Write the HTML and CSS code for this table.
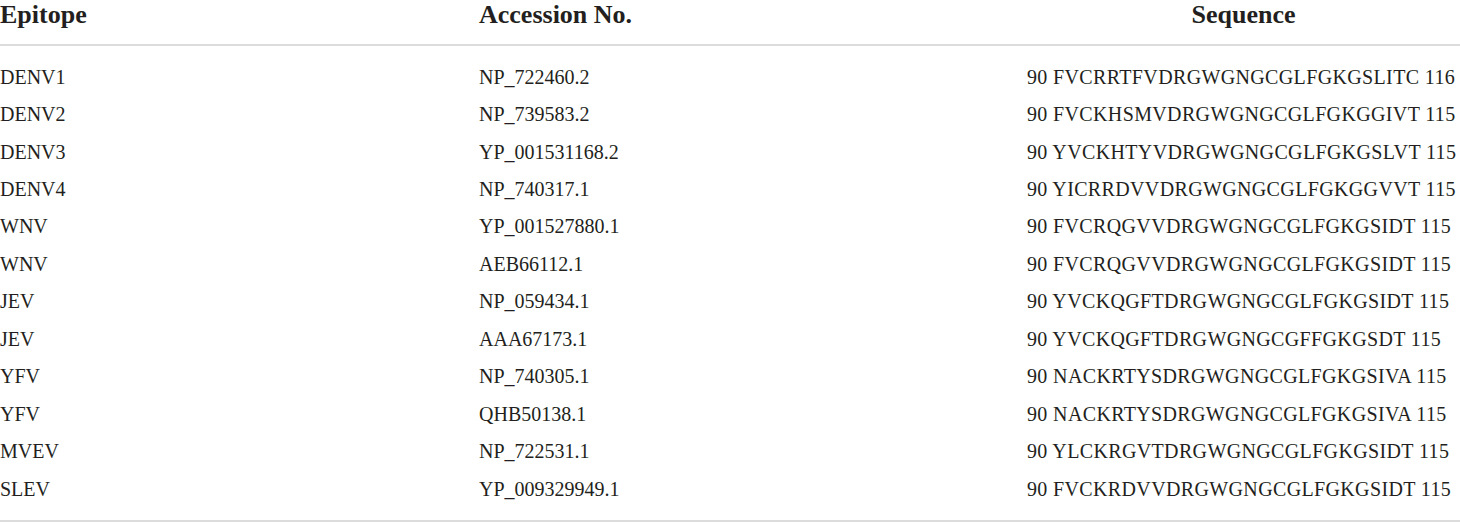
FILE: index.html
```html
<!DOCTYPE html>
<html>
<head>
<meta charset="utf-8">
<link rel="stylesheet" href="styles.css">
</head>
<body>
<table class="tbl">
  <thead>
    <tr><th class="c1">Epitope</th><th class="c2">Accession No.</th><th class="c3">Sequence</th></tr>
  </thead>
  <tbody>
    <tr><td>DENV1</td><td>NP_722460.2</td><td class="seq">90 FVCRRTFVDRGWGNGCGLFGKGSLITC 116</td></tr>
    <tr><td>DENV2</td><td>NP_739583.2</td><td class="seq">90 FVCKHSMVDRGWGNGCGLFGKGGIVT 115</td></tr>
    <tr><td>DENV3</td><td>YP_001531168.2</td><td class="seq">90 YVCKHTYVDRGWGNGCGLFGKGSLVT 115</td></tr>
    <tr><td>DENV4</td><td>NP_740317.1</td><td class="seq">90 YICRRDVVDRGWGNGCGLFGKGGVVT 115</td></tr>
    <tr><td>WNV</td><td>YP_001527880.1</td><td class="seq">90 FVCRQGVVDRGWGNGCGLFGKGSIDT 115</td></tr>
    <tr><td>WNV</td><td>AEB66112.1</td><td class="seq">90 FVCRQGVVDRGWGNGCGLFGKGSIDT 115</td></tr>
    <tr><td>JEV</td><td>NP_059434.1</td><td class="seq">90 YVCKQGFTDRGWGNGCGLFGKGSIDT 115</td></tr>
    <tr><td>JEV</td><td>AAA67173.1</td><td class="seq">90 YVCKQGFTDRGWGNGCGFFGKGSDT 115</td></tr>
    <tr><td>YFV</td><td>NP_740305.1</td><td class="seq">90 NACKRTYSDRGWGNGCGLFGKGSIVA 115</td></tr>
    <tr><td>YFV</td><td>QHB50138.1</td><td class="seq">90 NACKRTYSDRGWGNGCGLFGKGSIVA 115</td></tr>
    <tr><td>MVEV</td><td>NP_722531.1</td><td class="seq">90 YLCKRGVTDRGWGNGCGLFGKGSIDT 115</td></tr>
    <tr><td>SLEV</td><td>YP_009329949.1</td><td class="seq">90 FVCKRDVVDRGWGNGCGLFGKGSIDT 115</td></tr>
  </tbody>
</table>
</body>
</html>
```
FILE: styles.css
```css
html, body {
  margin: 0;
  padding: 0;
  background: #fff;
}
body {
  width: 1460px;
  height: 523px;
  overflow: hidden;
  font-family: "Liberation Serif", "Times New Roman", serif;
  color: #231f20;
}
.tbl {
  width: 1460px;
  border-collapse: collapse;
  table-layout: fixed;
}
.tbl th {
  font-size: 26px;
  font-weight: bold;
  text-align: left;
  height: 44px;
  line-height: 29px;
  padding: 0;
  vertical-align: top;
  border-bottom: 2px solid #dcdcdc;
}
.tbl th.c1 { width: 479px; }
.tbl th.c2 { width: 548px; }
.tbl th.c3 { text-align: center; }
.tbl td {
  font-size: 20px;
  line-height: 22px;
  height: 37.45px;
  padding: 0;
  vertical-align: middle;
  white-space: nowrap;
}
.tbl td.seq { letter-spacing: 0.36px; }
.tbl tbody tr:first-child td { padding-top: 12px; }
.tbl tbody tr:last-child td { padding-bottom: 13px; border-bottom: 2px solid #dcdcdc; }
```
